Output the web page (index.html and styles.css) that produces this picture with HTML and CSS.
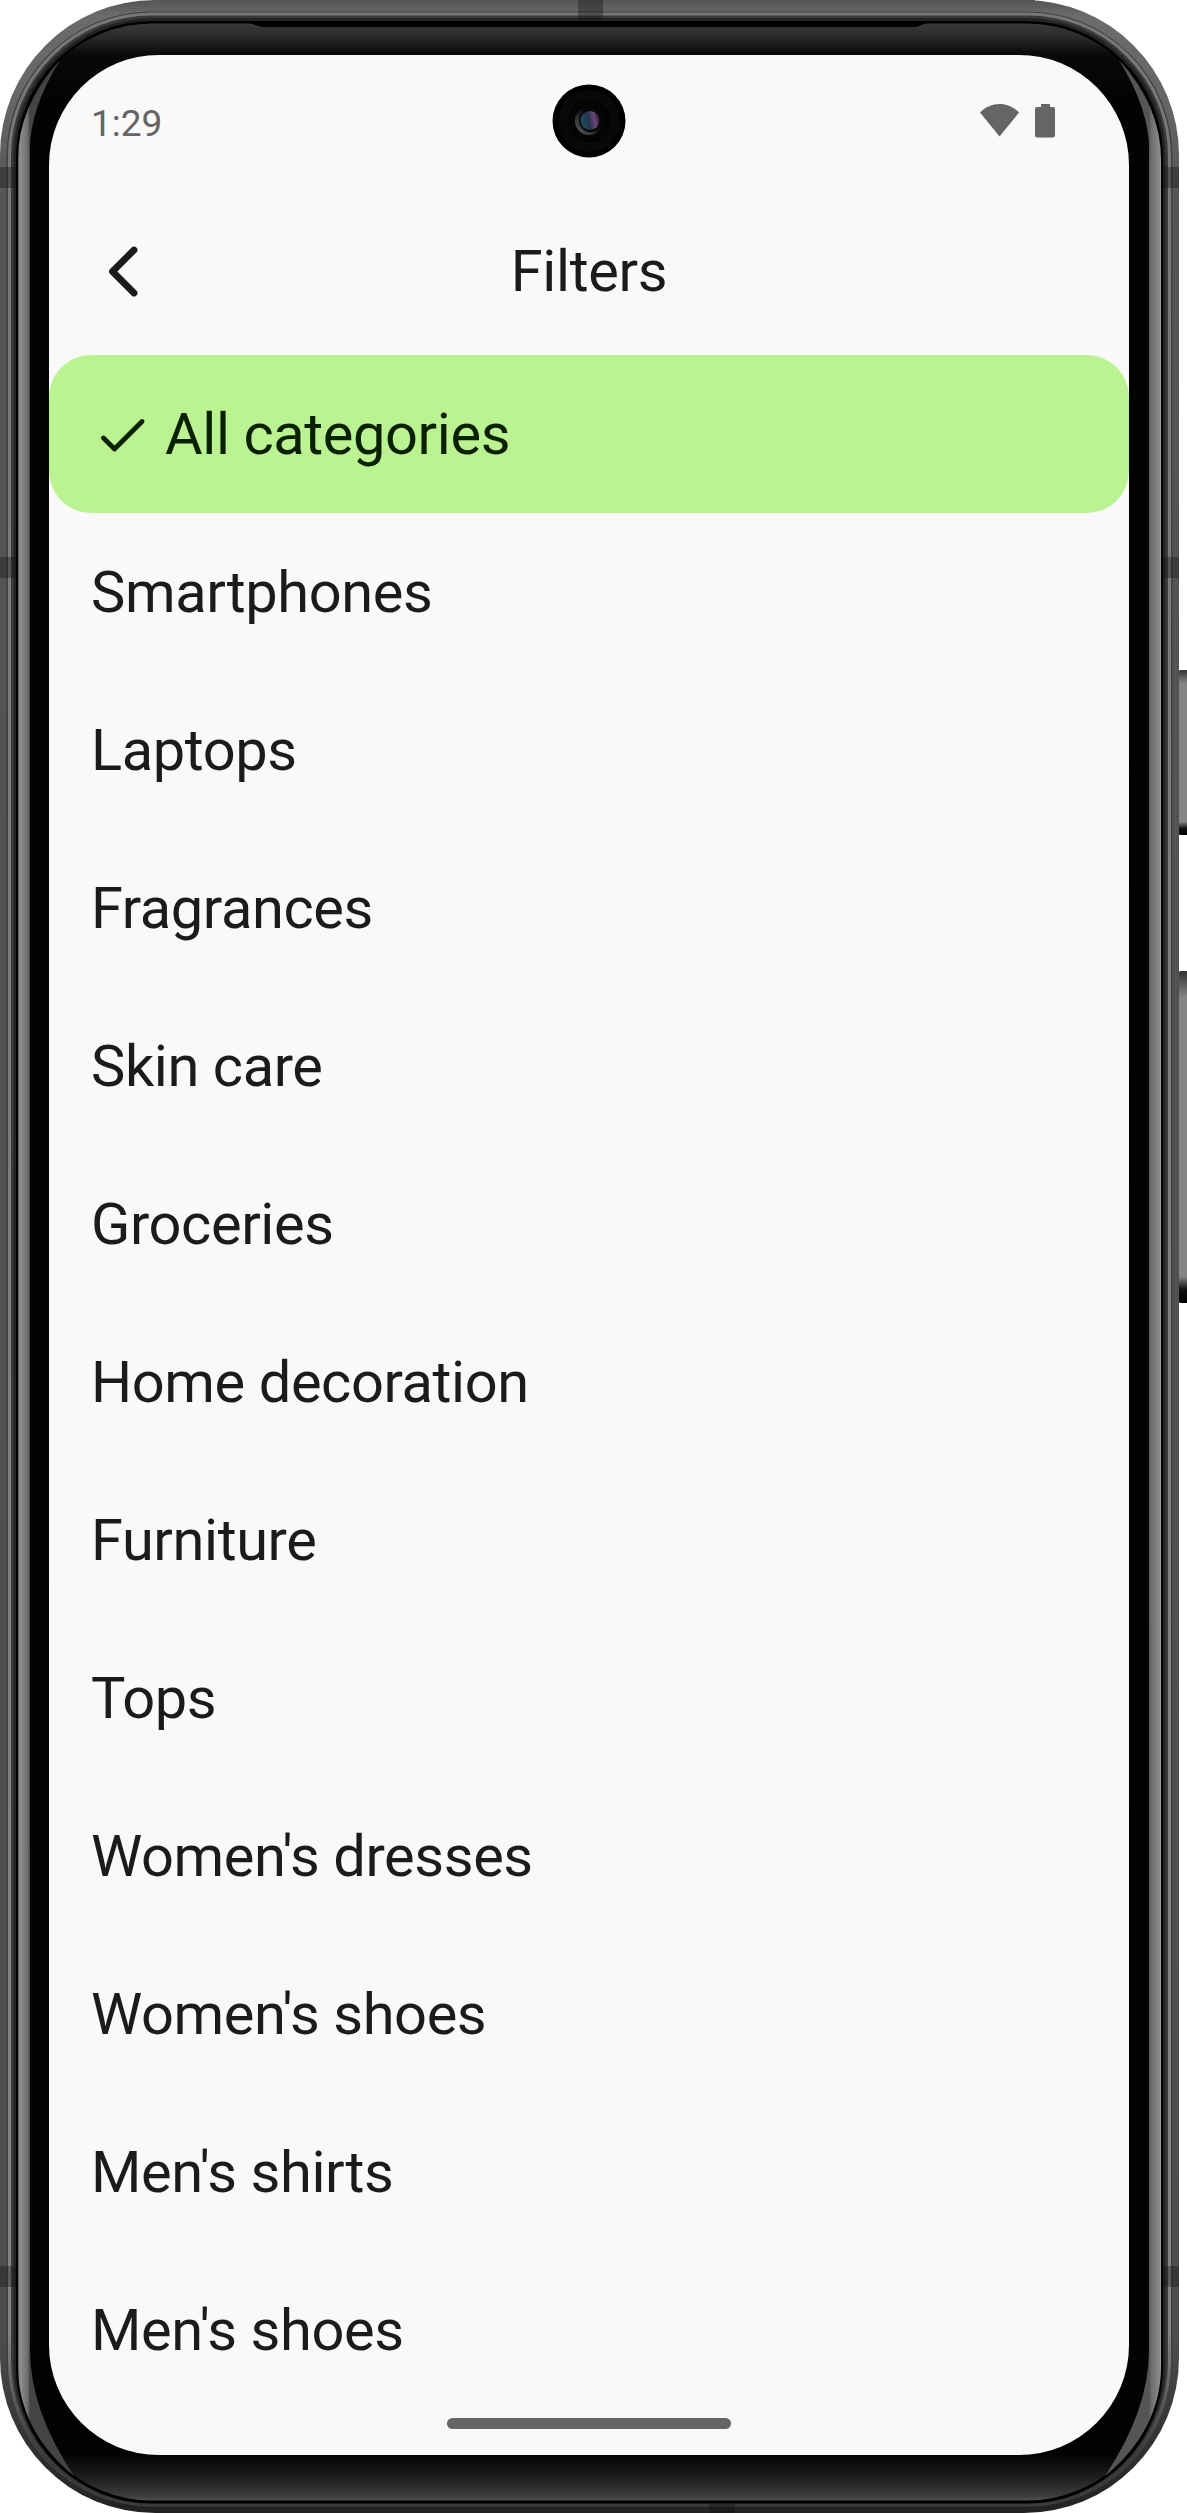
FILE: index.html
```html
<!DOCTYPE html>
<html lang="en">
<head>
<meta charset="utf-8">
<title>Filters</title>
<link rel="stylesheet" href="styles.css">
</head>
<body>
<div class="phone">
  <svg class="frame" width="1187" height="2513" viewBox="0 0 1187 2513" aria-hidden="true">
    <defs>
      <linearGradient id="edge" x1="0" y1="0" x2="0" y2="1">
        <stop offset="0" stop-color="#555"/><stop offset=".006" stop-color="#6b6b6b"/><stop offset=".04" stop-color="#666"/><stop offset=".08" stop-color="#555"/><stop offset=".93" stop-color="#4d4d4d"/><stop offset=".97" stop-color="#333"/><stop offset="1" stop-color="#222"/>
      </linearGradient>
      <linearGradient id="line" x1="0" y1="0" x2="0" y2="1">
        <stop offset="0" stop-color="#777"/><stop offset=".93" stop-color="#858585"/><stop offset=".98" stop-color="#3a3a3a"/>
      </linearGradient>
      <linearGradient id="bezel" x1="0" y1="23" x2="0" y2="2501" gradientUnits="userSpaceOnUse">
        <stop offset="0" stop-color="#3a3a3a"/><stop offset=".006" stop-color="#292929"/><stop offset=".0125" stop-color="#090909"/><stop offset=".03" stop-color="#030303"/><stop offset=".981" stop-color="#020202"/><stop offset=".99" stop-color="#1c1c1c"/><stop offset=".998" stop-color="#3c3c3c"/><stop offset="1" stop-color="#555"/>
      </linearGradient>
      <linearGradient id="silverL" x1="18" y1="0" x2="30" y2="0" gradientUnits="userSpaceOnUse">
        <stop offset="0" stop-color="#555"/><stop offset=".15" stop-color="#909090"/><stop offset=".8" stop-color="#6e6e6e"/><stop offset="1" stop-color="#444"/>
      </linearGradient>
      <linearGradient id="silverR" x1="1149" y1="0" x2="1161" y2="0" gradientUnits="userSpaceOnUse">
        <stop offset="0" stop-color="#555"/><stop offset=".2" stop-color="#6e6e6e"/><stop offset=".9" stop-color="#8c8c8c"/><stop offset="1" stop-color="#aaa"/>
      </linearGradient>
      <linearGradient id="key" x1="0" y1="0" x2="0" y2="1">
        <stop offset="0" stop-color="#333"/><stop offset=".08" stop-color="#858585"/><stop offset=".92" stop-color="#858585"/><stop offset=".96" stop-color="#111"/><stop offset="1" stop-color="#000"/>
      </linearGradient>
    </defs>
    <rect x="1178" y="670" width="14" height="165" rx="3" fill="url(#key)"/>
    <rect x="1178" y="971" width="14" height="332" rx="3" fill="url(#key)"/>
    <rect x="0" y="0" width="1179" height="2513" rx="155" fill="url(#edge)"/>
    <path d="M667 0q8 4 20 4H1010q16 0 25-3V0Z" fill="#555"/>
    <rect x="6.500" y="11.500" width="1166" height="2495" rx="145" fill="#404040"/>
    <rect x="9.500" y="14" width="1160" height="2490" rx="142" fill="#3a3a3a" stroke="url(#line)" stroke-width="3"/>
    <rect x="13.500" y="18" width="1152" height="2485" rx="138" fill="#242424"/>
    <rect x="16" y="21" width="1147" height="2482.500" rx="136" fill="#000"/>
    <rect x="18" y="23.500" width="1143" height="2477" rx="134" fill="url(#bezel)"/>
    <path d="M246 22h684l-14 5H262Z" fill="#000"/>
    <path d="M60 60Q18 106 18 160V2366Q18 2430 74 2476Q30 2410 30 2350V155Q28 112 60 60Z" fill="url(#silverL)"/>
    <path d="M1119 60Q1161 106 1161 160V2366Q1161 2430 1105 2476Q1149 2410 1149 2350V155Q1151 112 1119 60Z" fill="url(#silverR)"/>
    <g fill="#111" fill-opacity=".36">
      <path d="M0 167h16v21H0ZM0 557h16v21H0ZM0 2266h16v21H0ZM1163 167h16v21h-16ZM1163 557h16v21h-16ZM1163 2266h16v21h-16ZM578 0h25v20h-25ZM709 2504h26v9h-26Z"/>
    </g>
  </svg>
  <main class="screen">
    <header class="status">
      <span class="time">1:29</span>
      <svg class="status-icons" width="76" height="36" viewBox="0 0 76 36" fill="#656565" aria-hidden="true">
        <path d="M0 9.500C11-2 28-2 39 9.500L19.500 33.500Z"/>
        <path d="M61 1h9v3h3q2 0 2 2V32.500q0 2-2 2H57q-2 0-2-2V6q0-2 2-2h4Z"/>
      </svg>
    </header>
    <div class="appbar">
      <svg class="back" width="32" height="54" viewBox="0 0 32 54" fill="none" stroke="#1b1b1b" stroke-width="6.800" stroke-linecap="round" stroke-linejoin="round" aria-hidden="true"><path d="M27 6L5.500 27.500L27 49"/></svg>
      <h1>Filters</h1>
    </div>
    <ul class="list">
      <li class="selected"><svg class="check" width="46" height="36" viewBox="0 0 46 36" fill="none" stroke="#0a2100" stroke-width="4.800" stroke-linecap="round" stroke-linejoin="round" aria-hidden="true"><path d="M4.500 21L15.500 32L43 4.500"/></svg>All categories</li>
      <li>Smartphones</li>
      <li>Laptops</li>
      <li>Fragrances</li>
      <li>Skin care</li>
      <li>Groceries</li>
      <li>Home decoration</li>
      <li>Furniture</li>
      <li>Tops</li>
      <li>Women's dresses</li>
      <li>Women's shoes</li>
      <li>Men's shirts</li>
      <li>Men's shoes</li>
    </ul>
    <div class="nav-handle"></div>
  </main>
  <svg class="camera" width="74" height="74" viewBox="0 0 74 74" aria-hidden="true">
    <defs>
      <linearGradient id="lens" x1="0" y1="0.600" x2="1" y2="0.400"><stop offset="0" stop-color="#1b5063"/><stop offset=".45" stop-color="#26334f"/><stop offset=".75" stop-color="#6b4778"/><stop offset="1" stop-color="#2b1830"/></linearGradient>
      <linearGradient id="ring" x1="1" y1="0" x2="0" y2="1"><stop offset=".4" stop-color="#080808"/><stop offset="1" stop-color="#666"/></linearGradient>
    </defs>
    <circle cx="37" cy="37" r="36.500" fill="#000"/>
    <circle cx="37" cy="37" r="31" fill="#080808"/>
    <circle cx="37" cy="37" r="23" fill="#040404" stroke="#101010"/>
    <circle cx="37" cy="37" r="14" fill="url(#ring)"/>
    <circle cx="38.500" cy="36.500" r="11.500" fill="#080808"/>
    <circle cx="38" cy="36.500" r="9.500" fill="url(#lens)"/>
  </svg>
</div>
</body>
</html>
```
FILE: styles.css
```css
* { box-sizing: border-box; }
body { margin: 0; background: #fff; font-family: Roboto, sans-serif; }
.phone { position: relative; width: 1187px; height: 2513px; padding: 55px 58px 58px 49px; overflow: hidden; }
.frame { position: absolute; left: 0; top: 0; }
.screen { position: relative; display: flex; flex-direction: column; width: 1080px; height: 2400px; border-radius: 110px; background: #f9f9f9; color: #1b1b1b; overflow: hidden; }
.status { display: flex; align-items: center; justify-content: space-between; height: 132px; padding: 0 73px 0 42px; font-size: 37px; color: #656565; }
.time { padding-top: 4px; }
.status-icons { flex: none; }
.appbar { display: grid; grid-template-columns: 60px 1fr 60px; align-items: center; height: 168px; padding: 0 58px; }
.back { display: block; }
h1 { margin: 0; font-size: 57.75px; font-weight: 400; line-height: 73px; letter-spacing: -0.35px; text-align: center; }
.list { list-style: none; margin: 0; padding: 0; flex: 1; }
.list li { display: flex; align-items: center; height: 158px; padding: 1px 0 0 42px; font-size: 57.75px; line-height: 73px; letter-spacing: -0.4px; white-space: pre; }
.list .selected { border-radius: 42px; background: #bbf393; color: #0a2100; }
.check { margin: 0 20px 0 8px; }
.nav-handle { align-self: center; flex: none; width: 284px; height: 11px; margin-bottom: 26px; border-radius: 6px; background: #656565; }
.camera { position: absolute; left: 552px; top: 84px; }
```
